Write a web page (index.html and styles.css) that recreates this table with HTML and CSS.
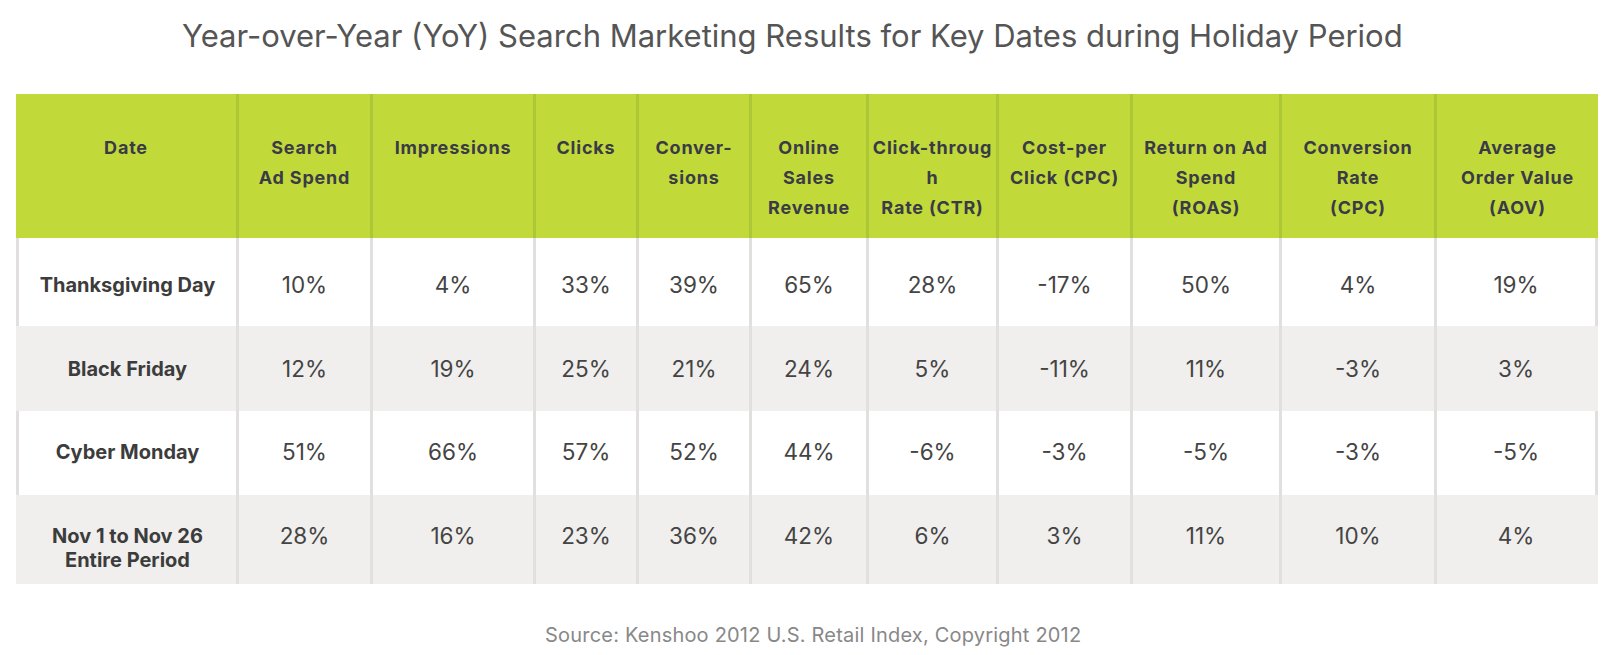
FILE: index.html
```html
<!DOCTYPE html>
<html>
<head>
<meta charset="utf-8">
<link rel="stylesheet" href="styles.css">
</head>
<body>
<h1 class="title">Year-over-Year (YoY) Search Marketing Results for Key Dates during Holiday Period</h1>
<div class="table">
  <div class="row head">
    <div class="cell">Date</div>
    <div class="cell">Search<br>Ad Spend</div>
    <div class="cell">Impressions</div>
    <div class="cell">Clicks</div>
    <div class="cell">Conver-<br>sions</div>
    <div class="cell">Online<br>Sales<br>Revenue</div>
    <div class="cell">Click-throug<br>h<br>Rate (CTR)</div>
    <div class="cell">Cost-per<br>Click (CPC)</div>
    <div class="cell">Return on Ad<br>Spend<br>(ROAS)</div>
    <div class="cell">Conversion<br>Rate<br>(CPC)</div>
    <div class="cell">Average<br>Order Value<br>(AOV)</div>
  </div>
  <div class="row body white r1">
    <div class="cell date">Thanksgiving Day</div>
    <div class="cell">10%</div><div class="cell">4%</div><div class="cell">33%</div><div class="cell">39%</div><div class="cell">65%</div><div class="cell">28%</div><div class="cell">-17%</div><div class="cell">50%</div><div class="cell">4%</div><div class="cell">19%</div>
  </div>
  <div class="row body grey r2">
    <div class="cell date">Black Friday</div>
    <div class="cell">12%</div><div class="cell">19%</div><div class="cell">25%</div><div class="cell">21%</div><div class="cell">24%</div><div class="cell">5%</div><div class="cell">-11%</div><div class="cell">11%</div><div class="cell">-3%</div><div class="cell">3%</div>
  </div>
  <div class="row body white r3">
    <div class="cell date">Cyber Monday</div>
    <div class="cell">51%</div><div class="cell">66%</div><div class="cell">57%</div><div class="cell">52%</div><div class="cell">44%</div><div class="cell">-6%</div><div class="cell">-3%</div><div class="cell">-5%</div><div class="cell">-3%</div><div class="cell">-5%</div>
  </div>
  <div class="row body grey r4">
    <div class="cell date">Nov 1 to Nov 26<br>Entire Period</div>
    <div class="cell">28%</div><div class="cell">16%</div><div class="cell">23%</div><div class="cell">36%</div><div class="cell">42%</div><div class="cell">6%</div><div class="cell">3%</div><div class="cell">11%</div><div class="cell">10%</div><div class="cell">4%</div>
  </div>
</div>
<p class="source">Source: Kenshoo 2012 U.S. Retail Index, Copyright 2012</p>
</body>
</html>
```

FILE: styles.css
```css
body {
  margin: 0;
  background: #fff;
  font-family: Inter, "Liberation Sans", sans-serif;
}
.title {
  margin: 0;
  height: 94px;
  box-sizing: border-box;
  padding: 16px 0 0 182px;
  font-size: 31px;
  line-height: 40px;
  font-weight: 400;
  color: #555;
  white-space: nowrap;
}
.table {
  margin-left: 16px;
  width: 1582px;
}
.row {
  display: grid;
  grid-template-columns: 220px 134px 163px 103px 113px 117px 130px 134px 149px 155px 164px;
}
.cell {
  box-sizing: border-box;
  text-align: center;
  white-space: nowrap;
}
.head {
  background: #c1da3a;
  height: 144px;
}
.head .cell {
  border-left: 3px solid #adc837;
  padding-top: 39px;
  font-size: 18px;
  line-height: 30px;
  font-weight: 700;
  letter-spacing: 0.8px;
  color: #3a3b46;
}
.head .cell:first-child {
  border-left: none;
}
.body .cell {
  border-left: 3px solid #e1e0de;
  padding-top: 32px;
  font-size: 22.5px;
  line-height: 24px;
  color: #444;
}
.body .cell:last-child {
  border-right: 3px solid #e1e0de;
}
.body .cell.date {
  font-size: 20px;
  font-weight: 700;
  color: #3c3c3c;
}
.white { background: #fff; }
.grey { background: #f0efed; }
.grey .cell:first-child { border-left-color: transparent; }
.grey .cell:last-child { border-right-color: transparent; }
.r1 { height: 88px; }
.r1 .cell { padding-top: 35px; }
.r2 { height: 85px; }
.r2 .cell { padding-top: 31px; }
.r3 { height: 84px; }
.r3 .cell { padding-top: 29px; }
.r4 { height: 89px; }
.r4 .cell { padding-top: 29px; }
.source {
  margin: 39px 0 0;
  padding-left: 545px;
  font-size: 20px;
  line-height: 24px;
  letter-spacing: 0.2px;
  color: #888;
}
```
